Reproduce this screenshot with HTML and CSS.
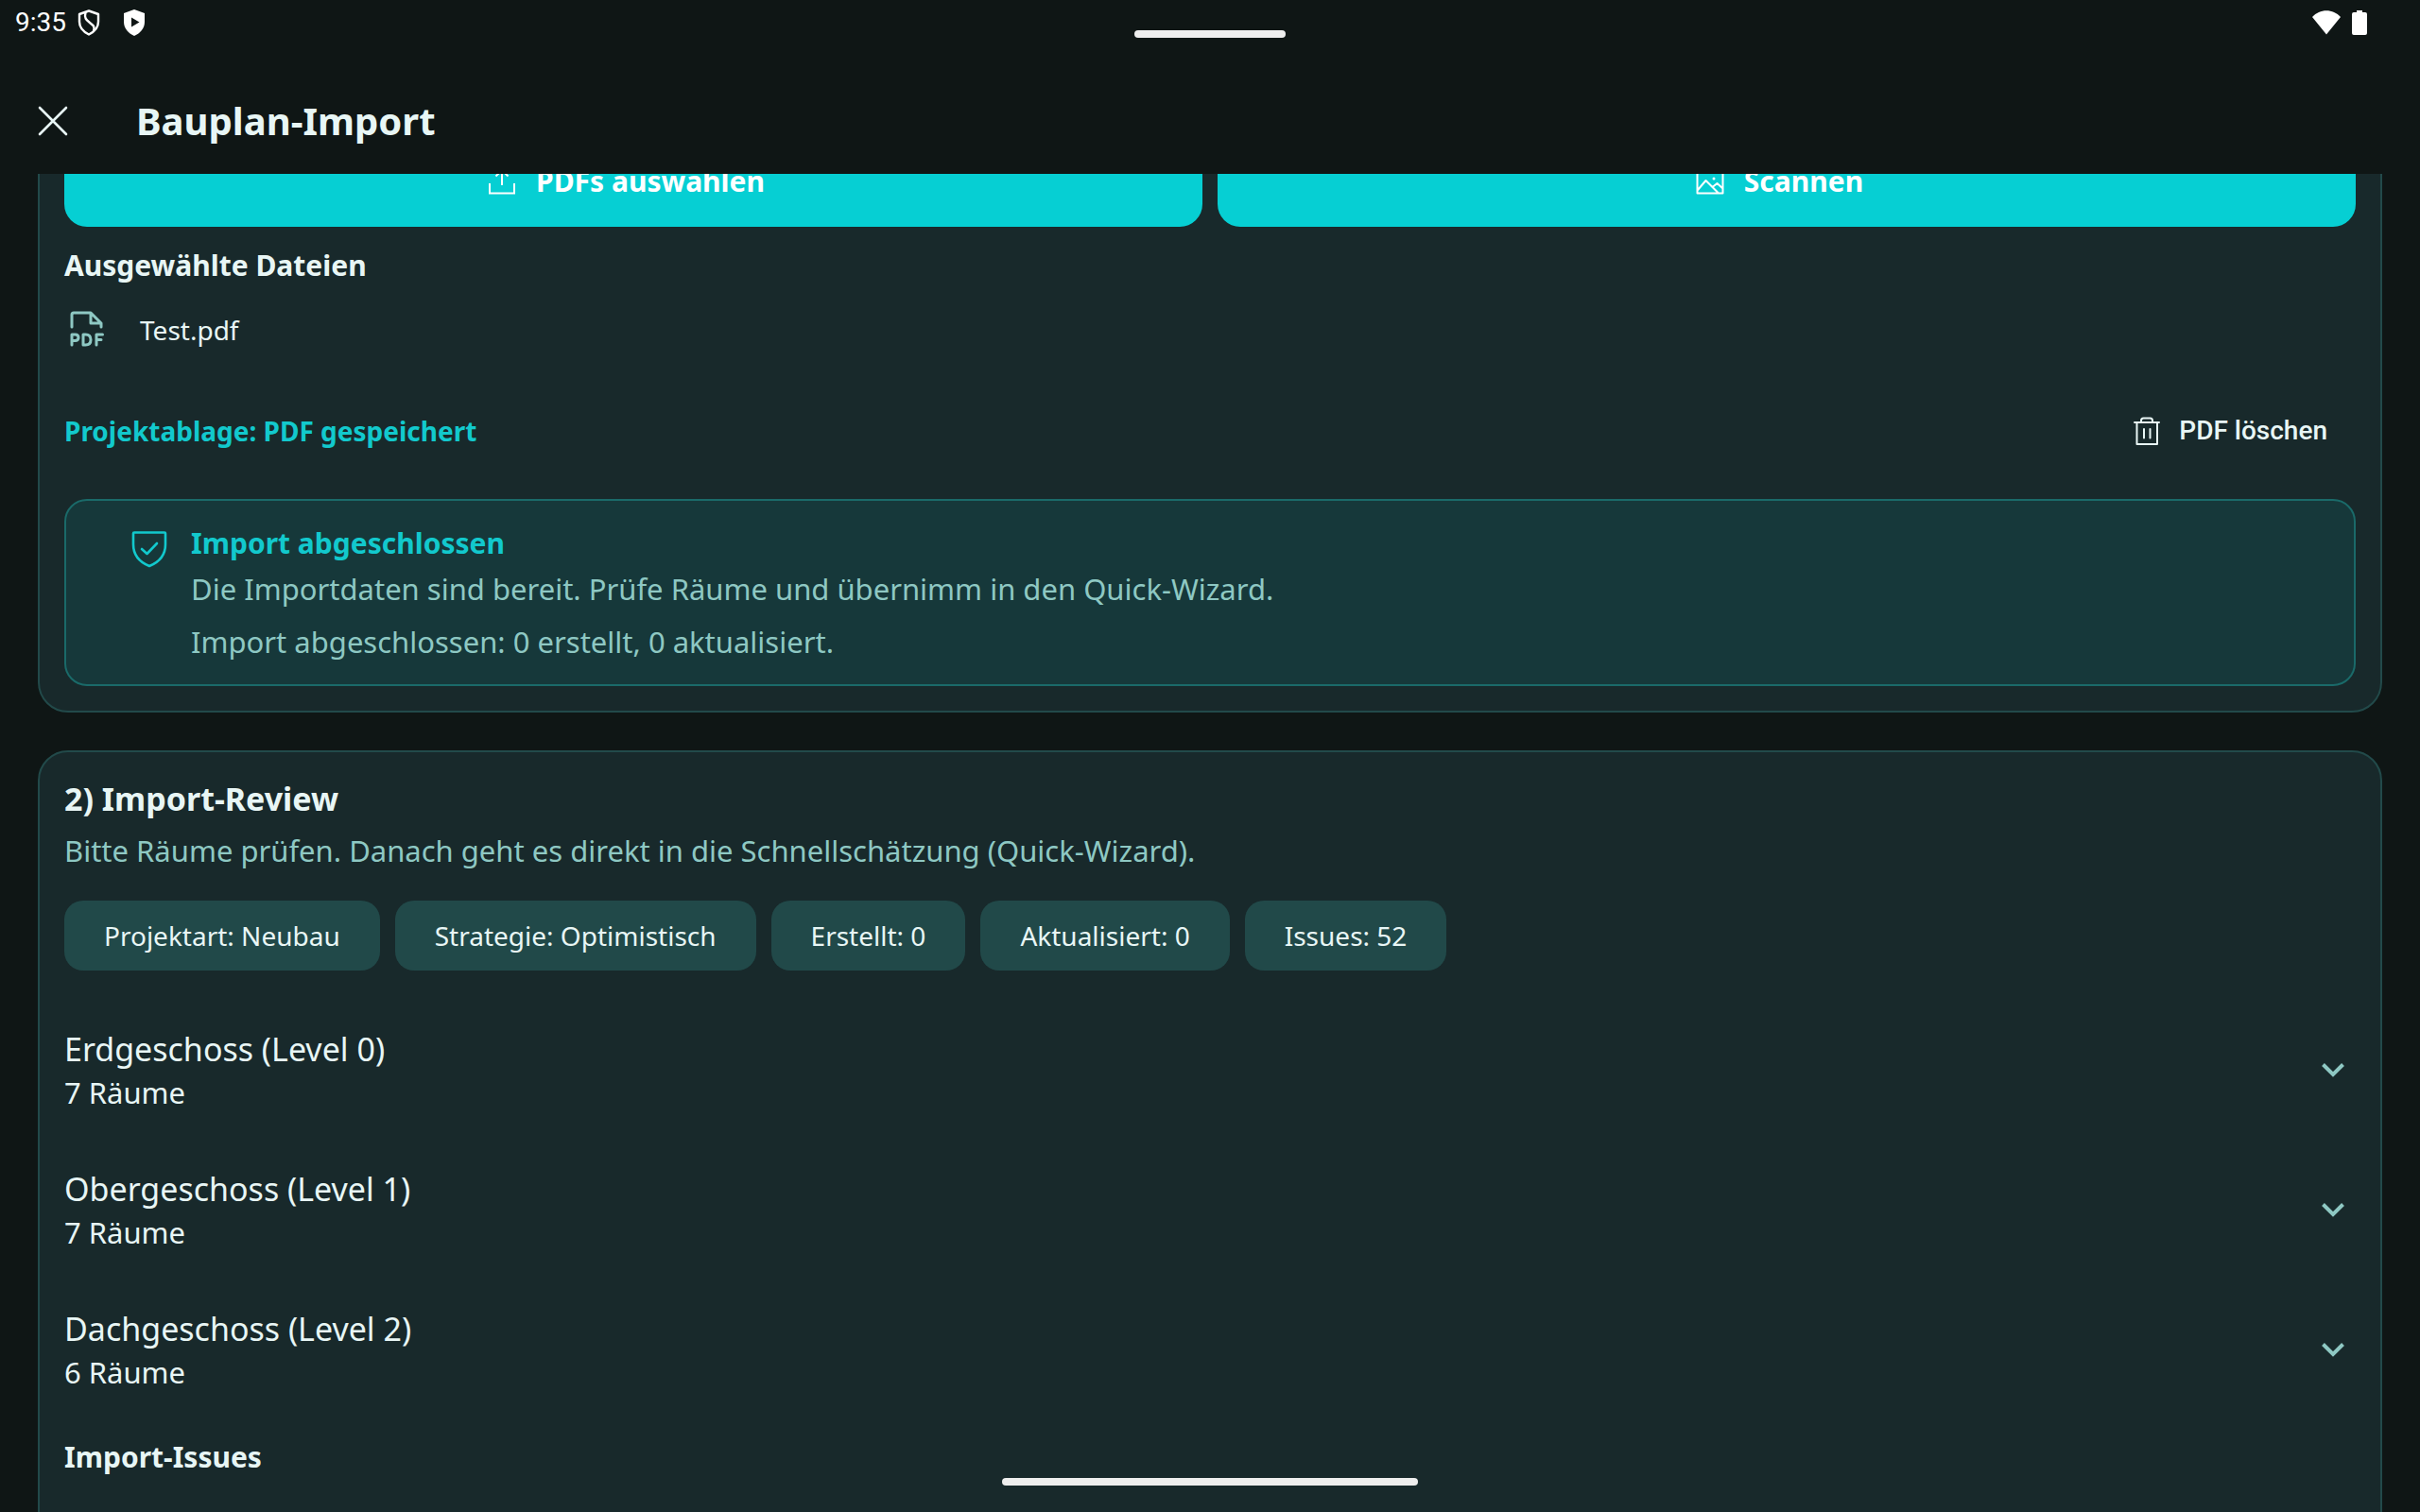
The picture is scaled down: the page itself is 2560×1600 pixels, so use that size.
FILE: index.html
```html
<!DOCTYPE html>
<html lang="de">
<head>
<meta charset="UTF-8">
<meta name="viewport" content="width=device-width, initial-scale=1.0">
<title>Bauplan-Import</title>
<link rel="stylesheet" href="styles.css">
</head>
<body>

<div class="status-bar">
    <div class="status-left">
        <span class="clock">9:35</span>
        <svg class="status-icon" viewBox="0 0 24 28" fill="none" stroke="#fff" stroke-width="2.4" stroke-linejoin="round">
            <path d="M12 1.5 L22 5 V13 C22 19 18 23.5 12 26.5 C6 23.5 2 19 2 13 V5 Z"/>
            <path d="M8.500 3 C7 9 9 11 13 14 C17 17 18.500 18 17 23"/>
        </svg>
        <svg class="status-icon" viewBox="0 0 24 28">
            <path d="M12 0 L23 4 V13 C23 20 18.500 25 12 28 C5.500 25 1 20 1 13 V4 Z" fill="#fff"/>
            <path d="M9 8.500 L17.500 13.500 L9 18.500 Z" fill="#0f1615"/>
        </svg>
    </div>
    <div class="status-right">
        <svg class="wifi-icon" viewBox="0 0 30 26"><path d="M0 7 C8 -2 22 -2 30 7 L15 25.500 Z" fill="#fff"/></svg>
        <svg class="battery-icon" viewBox="0 0 16 26"><path d="M5 0 H11 V2 H14 Q16 2 16 4 V24 Q16 26 14 26 H2 Q0 26 0 24 V4 Q0 2 2 2 H5 Z" fill="#fff"/></svg>
    </div>
</div>
<div class="window-handle"></div>

<header class="app-bar">
    <button class="close-button" type="button" aria-label="Schließen">
        <svg viewBox="0 0 32 32" fill="none" stroke="#e8f6f5" stroke-width="2.6" stroke-linecap="round"><path d="M2 2 L30 30 M30 2 L2 30"/></svg>
    </button>
    <h1>Bauplan-Import</h1>
</header>

<main>
    <section class="card card-upload">
        <div class="button-row">
            <button class="primary-button" type="button">
                <svg viewBox="0 0 32 32" fill="none" stroke="#fff" stroke-width="2"><path d="M3 18 V28.500 H29 V18 M16 20 V4 M9.500 10.500 L16 4 L22.500 10.500"/></svg>
                PDFs auswählen
            </button>
            <button class="primary-button" type="button">
                <svg viewBox="0 0 32 32" fill="none" stroke="#fff" stroke-width="2" stroke-linejoin="round">
                    <path d="M2.500 3.500 H29.500 V28.500 H2.500 Z M3 25 L11.500 15 L25 28.500 M18.500 22 L23.500 18 L29.500 23.500"/>
                    <circle cx="20" cy="13" r="1.500" fill="#fff" stroke="none"/>
                </svg>
                Scannen
            </button>
        </div>

        <h3>Ausgewählte Dateien</h3>
        <div class="file-row">
            <svg class="file-icon" viewBox="0 0 48 48" fill="none" stroke="#8ec8c3" stroke-width="3" stroke-linecap="round" stroke-linejoin="round">
                <path d="M8 21 V8 Q8 6 10 6 H28 L39 17 V21 M28 6 V17 H39"/>
                <path d="M8 40 V29 H11.500 Q15 29 15 32.300 Q15 35.500 11.500 35.500 H8 M20 29 V40 H22.500 Q28 40 28 34.500 Q28 29 22.500 29 Z M34 40 V29 H40.500 M34 34.500 H39"/>
            </svg>
            <span>Test.pdf</span>
        </div>

        <div class="storage-row">
            <span class="storage-label">Projektablage: PDF gespeichert</span>
            <button class="text-button" type="button">
                <svg viewBox="0 0 32 32" fill="none" stroke="#e8f6f5" stroke-width="2" stroke-linecap="round" stroke-linejoin="round"><path d="M3 7 H29 M5.500 7 V30 H27 V7 M10 6.500 V5 Q10 2.500 12.500 2.500 H19.500 Q22 2.500 22 5 V6.500 M13 14 V23.500 M19.500 14 V23.500"/></svg>
                PDF löschen
            </button>
        </div>

        <div class="banner">
            <svg viewBox="0 0 40 40" fill="none" stroke="#12c9cd" stroke-width="2.6" stroke-linecap="round" stroke-linejoin="round">
                <path d="M4 2.500 H36 Q37 2.500 37 3.500 V15 C37 27 30 34 20 38 C10 34 3 27 3 15 V3.500 Q3 2.500 4 2.500 Z"/>
                <path d="M12 20 L17.500 25 L28 14"/>
            </svg>
            <div>
                <h3>Import abgeschlossen</h3>
                <p>Die Importdaten sind bereit. Prüfe Räume und übernimm in den Quick-Wizard.</p>
                <p>Import abgeschlossen: 0 erstellt, 0 aktualisiert.</p>
            </div>
        </div>
    </section>

    <section class="card card-review">
        <h2>2) Import-Review</h2>
        <p class="subtitle">Bitte Räume prüfen. Danach geht es direkt in die Schnellschätzung (Quick-Wizard).</p>
        <div class="chips">
            <span class="chip">Projektart: Neubau</span>
            <span class="chip">Strategie: Optimistisch</span>
            <span class="chip">Erstellt: 0</span>
            <span class="chip">Aktualisiert: 0</span>
            <span class="chip">Issues: 52</span>
        </div>

        <div class="levels">
            <button class="level" type="button" aria-expanded="false">
                <span class="level-text">
                    <span class="level-name">Erdgeschoss (Level 0)</span>
                    <span class="level-rooms">7 Räume</span>
                </span>
                <svg viewBox="0 0 48 48" fill="none" stroke="#8ec8c3" stroke-width="4"><path d="M13.500 18.500 L24 29 L34.500 18.500"/></svg>
            </button>
            <button class="level" type="button" aria-expanded="false">
                <span class="level-text">
                    <span class="level-name">Obergeschoss (Level 1)</span>
                    <span class="level-rooms">7 Räume</span>
                </span>
                <svg viewBox="0 0 48 48" fill="none" stroke="#8ec8c3" stroke-width="4"><path d="M13.500 18.500 L24 29 L34.500 18.500"/></svg>
            </button>
            <button class="level" type="button" aria-expanded="false">
                <span class="level-text">
                    <span class="level-name">Dachgeschoss (Level 2)</span>
                    <span class="level-rooms">6 Räume</span>
                </span>
                <svg viewBox="0 0 48 48" fill="none" stroke="#8ec8c3" stroke-width="4"><path d="M13.500 18.500 L24 29 L34.500 18.500"/></svg>
            </button>
        </div>

        <h3>Import-Issues</h3>
    </section>
</main>
<div class="home-indicator"></div>

</body>
</html>
```
FILE: styles.css
```css
* {
    box-sizing: border-box;
}
body {
    margin: 0;
    height: 100vh;
    display: flex;
    flex-direction: column;
    overflow: hidden;
    background-color: #0f1615;
    color: #e8f6f5;
    font-family: "Noto Sans", sans-serif;
    font-size: 31px;
    line-height: 40px;
}
h1, h2, h3, p {
    margin: 0;
}
h3 {
    font-size: 30px;
    line-height: 40px;
}
button {
    border: none;
    padding: 0;
    background: none;
    color: inherit;
    font: inherit;
    cursor: pointer;
}
svg {
    display: block;
    flex-shrink: 0;
}

/* system bars */
.status-bar {
    flex-shrink: 0;
    display: flex;
    justify-content: space-between;
    height: 48px;
    padding: 0 56px 0 16px;
    color: #fff;
}
.status-left, .status-right {
    display: flex;
    align-items: center;
    gap: 12px;
}
.clock {
    font-family: Roboto, sans-serif;
    font-size: 28px;
}
.status-icon {
    width: 24px;
    height: 28px;
}
.status-icon + .status-icon {
    margin-left: 12px;
}
.wifi-icon {
    width: 30px;
    height: 26px;
}
.battery-icon {
    width: 16px;
    height: 26px;
}
.window-handle, .home-indicator {
    position: absolute;
    left: 50%;
    transform: translateX(-50%);
    height: 8px;
    border-radius: 4px;
    background-color: #eeeeee;
}
.window-handle {
    top: 32px;
    width: 160px;
}
.home-indicator {
    bottom: 28px;
    width: 440px;
}

/* app bar */
.app-bar {
    flex-shrink: 0;
    display: flex;
    align-items: center;
    gap: 72px;
    height: 136px;
    padding: 24px 40px 0;
}
.close-button svg {
    width: 32px;
    height: 32px;
}
.app-bar h1 {
    font-size: 40px;
    line-height: 56px;
}

/* content, scrolled so that the button row is cut by the app bar */
main {
    flex: 1;
    min-height: 0;
    overflow: hidden;
    padding: 0 40px;
}
.card {
    padding: 26px;
    border: 2px solid #224a4a;
    border-radius: 32px;
    background-color: #18292b;
}
.card-upload {
    margin-top: -68px;
    margin-bottom: 40px;
}
.button-row {
    display: flex;
    gap: 16px;
    margin-bottom: 21px;
}
.primary-button {
    flex: 1;
    display: flex;
    align-items: center;
    justify-content: center;
    gap: 20px;
    height: 96px;
    padding-right: 16px;
    border-radius: 24px;
    background-color: #06cfd3;
    color: #fff;
    font-size: 30px;
    font-weight: bold;
}
.primary-button svg, .text-button svg {
    width: 32px;
    height: 32px;
}
.file-row {
    display: flex;
    align-items: center;
    gap: 32px;
    height: 96px;
    font-size: 28px;
}
.file-icon {
    width: 48px;
    height: 48px;
}
.storage-row {
    display: flex;
    align-items: center;
    justify-content: space-between;
    height: 80px;
    margin: 19px 0 32px;
}
.storage-label {
    color: #12c9cd;
    font-size: 28px;
    font-weight: bold;
}
.text-button {
    display: flex;
    align-items: center;
    gap: 18px;
    padding: 0 30px;
    font-family: Roboto, sans-serif;
    font-size: 28px;
    font-weight: 500;
}
.banner {
    display: flex;
    gap: 24px;
    padding: 25px 68px;
    border: 2px solid #1a6a69;
    border-radius: 24px;
    background-color: #16383a;
    color: #8ec8c3;
}
.banner svg {
    width: 40px;
    height: 40px;
    margin-top: 6px;
}
.banner h3 {
    color: #12c9cd;
}
.banner p {
    margin-top: 8px;
}
.banner p + p {
    margin-top: 16px;
}

/* review */
.card-review {
    padding-bottom: 80px;
}
.card-review h2 {
    font-size: 34px;
    line-height: 46px;
}
.subtitle {
    margin-top: 12px;
    color: #8ec8c3;
}
.chips {
    display: flex;
    flex-wrap: wrap;
    gap: 16px;
    margin: 33px 0 31px;
}
.chip {
    padding: 17px 42px;
    border-radius: 20px;
    background-color: #214949;
    font-size: 28px;
}
.level {
    display: flex;
    align-items: center;
    justify-content: space-between;
    width: 100%;
    height: 148px;
    text-align: left;
}
.level-text {
    display: flex;
    flex-direction: column;
    gap: 4px;
}
.level-name {
    font-size: 34px;
    line-height: 44px;
}
.level svg {
    width: 48px;
    height: 48px;
}
.card-review h3 {
    margin-top: 20px;
}
```
